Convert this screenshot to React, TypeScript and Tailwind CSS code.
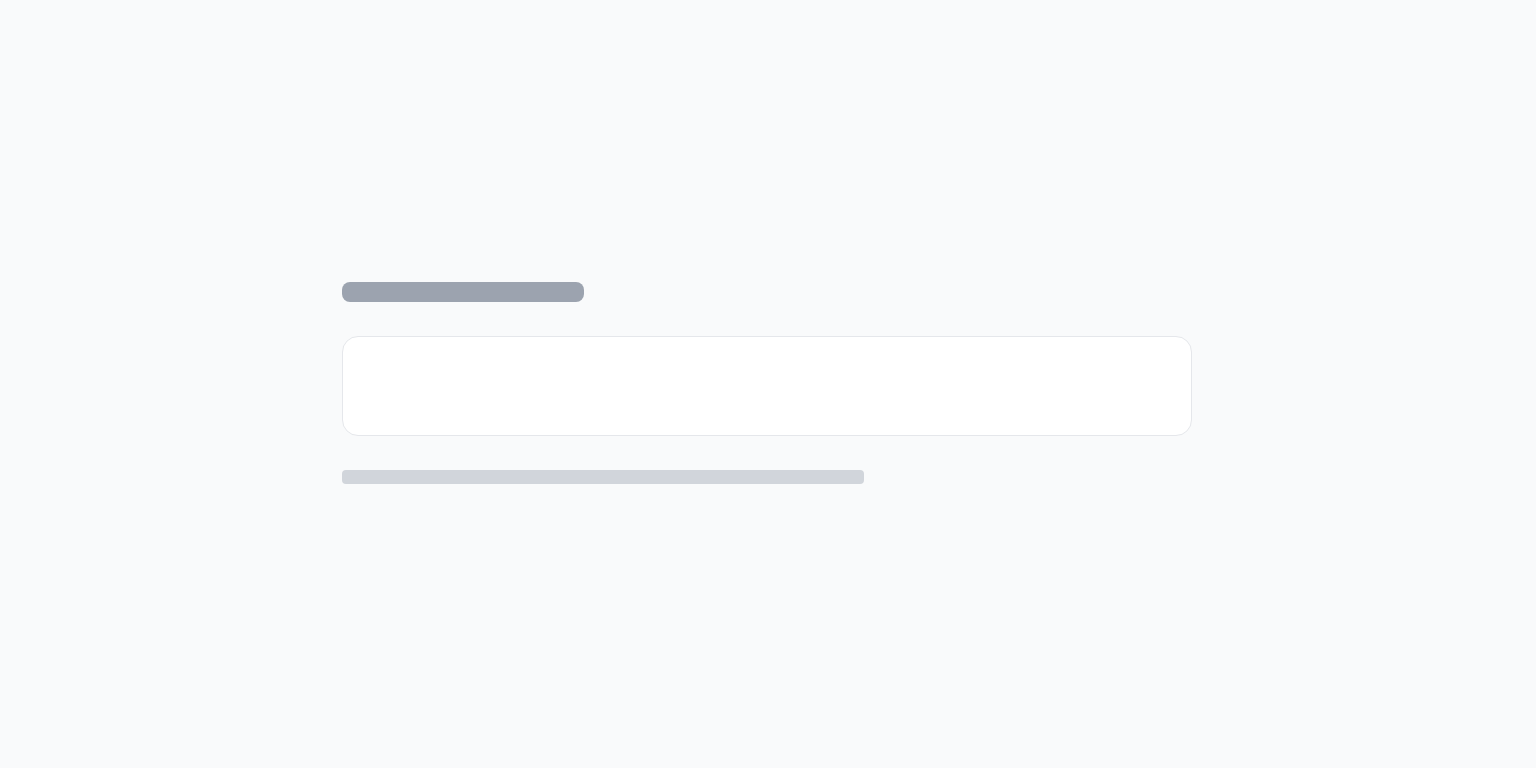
export default function App() {
  return (
    <div className="min-h-screen w-full bg-[#f9fafb] flex items-center justify-center">
      {/* Skeleton loader */}
      <div className="w-[850px] mr-[2px] mb-[2px] flex flex-col gap-[34px]">
        <div className="h-5 w-[242px] rounded-lg bg-[#9ca3af]" />
        <div className="h-[100px] w-full rounded-2xl border border-[#e5e7eb] bg-white" />
        <div className="h-[14px] w-[522px] rounded bg-[#d1d5db]" />
      </div>
    </div>
  )
}
